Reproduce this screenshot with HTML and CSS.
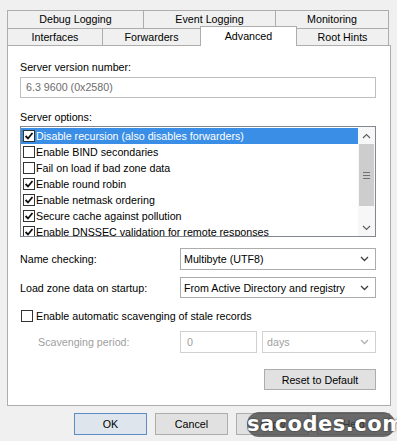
FILE: index.html
```html
<!DOCTYPE html>
<html lang="en">
<head>
    <meta charset="UTF-8">
    <meta name="viewport" content="width=device-width, initial-scale=1.0">
    <title>DNS Server Properties - Advanced</title>
    <link rel="stylesheet" href="styles.css">
</head>
<body>

    <div class="dialog">
        <div class="tabs">
            <div class="tab-row back">
                <div class="tab" style="width: 136px">Debug Logging</div>
                <div class="tab" style="width: 132px">Event Logging</div>
                <div class="tab" style="width: 114px">Monitoring</div>
            </div>
            <div class="tab-row front">
                <div class="tab" style="width: 95px">Interfaces</div>
                <div class="tab" style="width: 98px">Forwarders</div>
                <div class="tab selected" style="width: 97px">Advanced</div>
                <div class="tab" style="width: 92px">Root Hints</div>
            </div>
        </div>

        <div class="panel">
            <div class="label">Server version number:</div>
            <div class="textbox readonly">6.3 9600 (0x2580)</div>

            <div class="label options-label">Server options:</div>
            <div class="listbox">
                <div class="list-items">
                    <div class="item active"><span class="check on"></span>Disable recursion (also disables forwarders)</div>
                    <div class="item"><span class="check"></span>Enable BIND secondaries</div>
                    <div class="item"><span class="check"></span>Fail on load if bad zone data</div>
                    <div class="item"><span class="check on"></span>Enable round robin</div>
                    <div class="item"><span class="check on"></span>Enable netmask ordering</div>
                    <div class="item"><span class="check on"></span>Secure cache against pollution</div>
                    <div class="item"><span class="check on"></span>Enable DNSSEC validation for remote responses</div>
                </div>
                <div class="scrollbar">
                    <div class="arrow">
                        <svg width="9" height="6" viewBox="0 0 9 6"><polyline points="1,5 4.5,1.5 8,5" fill="none" stroke="#606060" stroke-width="1.2"/></svg>
                    </div>
                    <div class="thumb">
                        <span></span><span></span><span></span>
                    </div>
                    <div class="track"></div>
                    <div class="arrow">
                        <svg width="9" height="6" viewBox="0 0 9 6"><polyline points="1,1 4.5,4.5 8,1" fill="none" stroke="#606060" stroke-width="1.2"/></svg>
                    </div>
                </div>
            </div>

            <div class="field first-field">
                <div class="field-label">Name checking:</div>
                <div class="select">
                    <span>Multibyte (UTF8)</span>
                    <svg width="9" height="6" viewBox="0 0 9 6"><polyline points="1,1 4.5,4.5 8,1" fill="none" stroke="#404040" stroke-width="1.3"/></svg>
                </div>
            </div>
            <div class="field second-field">
                <div class="field-label">Load zone data on startup:</div>
                <div class="select">
                    <span>From Active Directory and registry</span>
                    <svg width="9" height="6" viewBox="0 0 9 6"><polyline points="1,1 4.5,4.5 8,1" fill="none" stroke="#404040" stroke-width="1.3"/></svg>
                </div>
            </div>

            <div class="checkrow">
                <span class="check"></span>Enable automatic scavenging of stale records
            </div>

            <div class="field scavenge">
                <div class="field-label disabled">Scavenging period:</div>
                <div class="textbox disabled-box period">0</div>
                <div class="select disabled-box unit">
                    <span>days</span>
                    <svg width="9" height="6" viewBox="0 0 9 6"><polyline points="1,1 4.5,4.5 8,1" fill="none" stroke="#b0b0b0" stroke-width="1.3"/></svg>
                </div>
            </div>

            <div class="reset-row">
                <button class="btn reset">Reset to Default</button>
            </div>
        </div>

        <div class="buttons">
            <button class="btn default">OK</button>
            <button class="btn">Cancel</button>
            <button class="btn">Apply</button>
            <button class="btn">Help</button>
            <div class="watermark">sacodes.com</div>
        </div>
    </div>

</body>
</html>
```

FILE: styles.css
```css
body {
    margin: 0;
    padding: 0;
    background: #f0f0f0;
    font-family: "Liberation Sans", Arial, sans-serif;
    font-size: 10.7px;
    color: #000;
    overflow: hidden;
}

.dialog {
    position: relative;
    height: 441px;
    padding: 10px 6px 0 7px;
    box-sizing: border-box;
    border-top: 2px solid #dce7f1;
    margin-top: -2px;
}

/* tabs */
.tab-row {
    display: flex;
}

.tab {
    box-sizing: border-box;
    height: 18px;
    line-height: 16px;
    text-align: center;
    background: #f0f0f0;
    border: 1px solid #adadad;
    border-right: none;
    border-bottom: none;
}

.tab:last-child {
    border-right: 1px solid #adadad;
}

.front .tab {
    height: 17px;
}

.front .tab.selected {
    background: #fff;
    height: 20px;
    margin-top: -2px;
    line-height: 19px;
    border-right: 1px solid #adadad;
    position: relative;
    z-index: 1;
    margin-bottom: -1px;
}

.front .tab.selected + .tab {
    border-left: none;
}

/* panel */
.panel {
    background: #fff;
    border: 1px solid #adadad;
    width: 384px;
    box-sizing: border-box;
    padding: 14px 14px 15px 12px;
}

.label {
    line-height: 14px;
}

.options-label {
    margin-top: 12px;
}

.textbox {
    box-sizing: border-box;
    height: 21px;
    line-height: 19px;
    margin-top: 3px;
    border: 1px solid #abadb3;
    padding: 0 5px;
    background: #fff;
}

.readonly {
    color: #6d6d6d;
    border-color: #bfbfbf;
}

.listbox {
    display: flex;
    margin-top: 2px;
    height: 111px;
    box-sizing: border-box;
    border: 1px solid #828790;
    overflow: hidden;
}

.list-items {
    flex: 1;
    padding-top: 1px;
    overflow: hidden;
}

.item {
    display: flex;
    align-items: center;
    height: 16px;
    padding-left: 2px;
    white-space: nowrap;
}

.item.active {
    background: #3a8ee6;
    color: #fff;
}

.check {
    width: 12px;
    height: 12px;
    box-sizing: border-box;
    border: 1px solid #333;
    background: #fff;
    margin-right: 1px;
    flex: none;
}

.check.on {
    background: #fff url("data:image/svg+xml;utf8,<svg xmlns='http://www.w3.org/2000/svg' width='10' height='10' viewBox='0 0 10 10'><polyline points='1.5,5 4,7.5 8.5,2' fill='none' stroke='%23111' stroke-width='1.8'/></svg>") center no-repeat;
}

.scrollbar {
    width: 17px;
    display: flex;
    flex-direction: column;
    background: #f7f7f7;
}

.arrow {
    height: 17px;
    display: flex;
    align-items: center;
    justify-content: center;
    flex: none;
}

.thumb {
    height: 62px;
    margin: 0 1px;
    background: #cdcdcd;
    display: flex;
    flex-direction: column;
    align-items: center;
    justify-content: center;
    gap: 2px;
}

.thumb span {
    width: 7px;
    height: 1px;
    background: #707070;
}

.track {
    flex: 1;
}

/* fields */
.field {
    display: flex;
    align-items: center;
}

.first-field {
    margin-top: 11px;
}

.second-field {
    margin-top: 7px;
}

.field-label {
    width: 160px;
    flex: none;
}

.disabled {
    color: #a0a0a0;
    padding-left: 18px;
    width: 142px;
}

.select {
    flex: 1;
    box-sizing: border-box;
    height: 22px;
    border: 1px solid #acacac;
    background: #fff;
    display: flex;
    align-items: center;
    justify-content: space-between;
    padding: 0 6px 0 3px;
}

.second-field .select {
    height: 21px;
}

.checkrow {
    display: flex;
    align-items: center;
    margin-top: 11px;
    line-height: 14px;
    padding-left: 1px;
}

.checkrow .check {
    width: 12px;
    height: 12px;
    margin-right: 3px;
}

.scavenge {
    margin-top: 8px;
}

.disabled-box {
    color: #a0a0a0;
    border-color: #d0d0d0;
    margin-top: 0;
}

.period {
    width: 77px;
    height: 22px;
    line-height: 20px;
    padding-left: 6px;
    flex: none;
}

.unit {
    margin-left: 5px;
    padding-left: 4px;
}

.reset-row {
    display: flex;
    justify-content: flex-end;
    margin-top: 16px;
}

.btn {
    font-family: "Liberation Sans", Arial, sans-serif;
    font-size: 10.7px;
    color: #000;
    background: #e1e1e1;
    border: 1px solid #adadad;
    height: 21px;
    padding: 0;
}

.reset {
    width: 112px;
}

.buttons {
    position: relative;
    display: flex;
    justify-content: flex-end;
    gap: 8px;
    margin-top: 7px;
    padding-right: 1px;
}

.buttons .btn {
    width: 73px;
    height: 22px;
}

.buttons .btn.default {
    border-color: #5b8ec4;
    background: #dfe5ec;
}

.watermark {
    position: absolute;
    right: -4px;
    top: -1px;
    width: 148px;
    height: 25px;
    border-radius: 12px;
    background: rgba(70, 70, 70, 0.78);
    color: #fff;
    font-family: "DejaVu Sans", sans-serif;
    font-weight: bold;
    font-size: 21px;
    line-height: 25px;
    text-align: center;
    letter-spacing: 0.5px;
    text-shadow: 0 0 2px #222;
}
```
